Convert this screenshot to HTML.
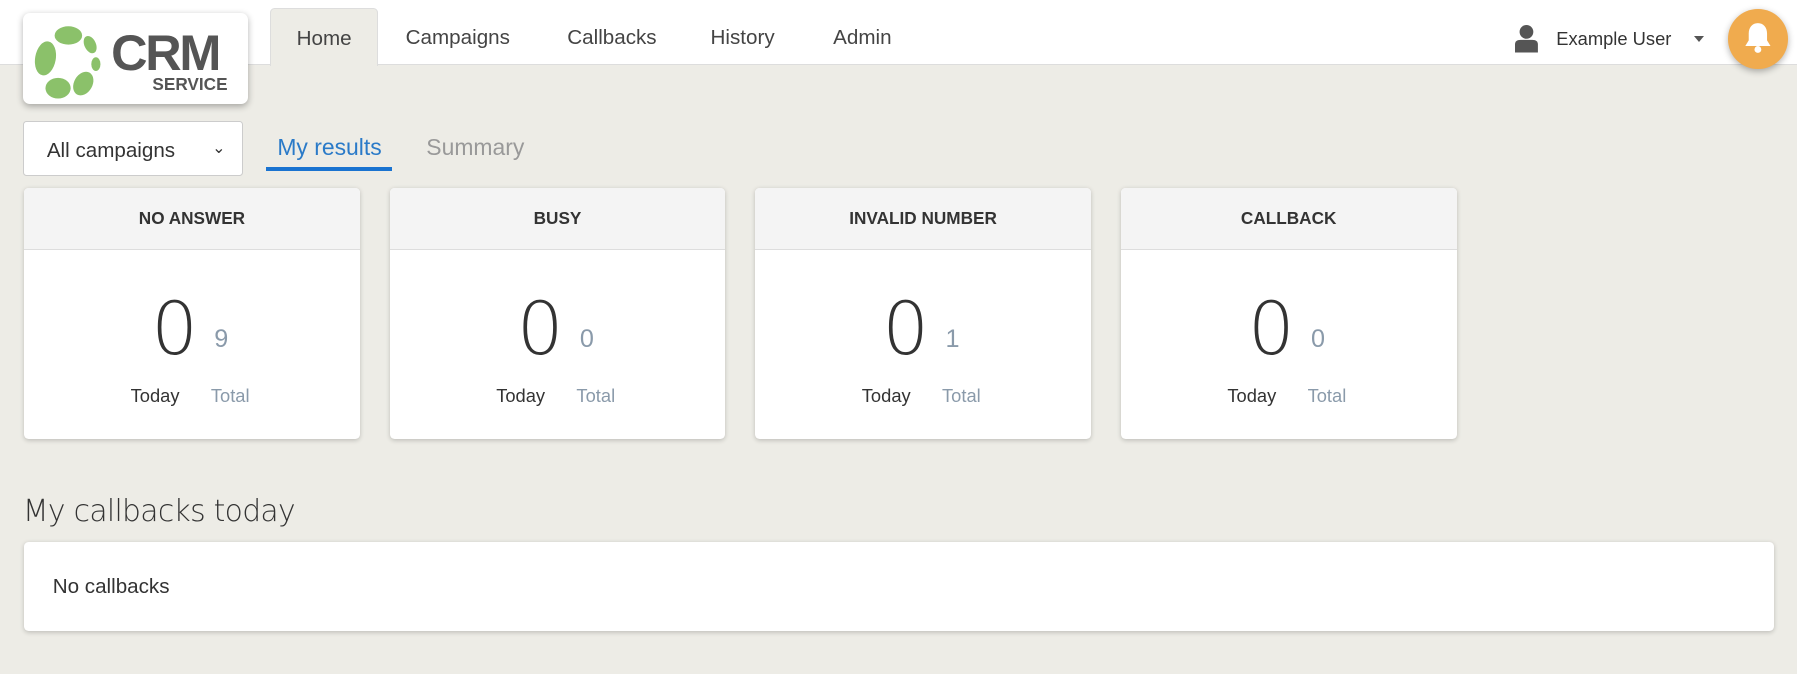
<!DOCTYPE html>
<html><head><style>
html,body{margin:0;padding:0;}
body{width:1797px;height:674px;overflow:hidden;background:#edece6;font-family:"Liberation Sans",sans-serif;color:#333;}
#z{zoom:1.146;width:1568px;height:588px;position:relative;}
.hdr{position:absolute;left:0;top:0;width:1568px;height:56px;background:#fff;border-bottom:1px solid #ddd;}
.logo{position:absolute;left:20px;top:11px;width:196px;height:80px;background:#fff;border-radius:6px;box-shadow:0 2px 6px rgba(0,0,0,.3);}
.tab{position:absolute;top:7px;height:50px;line-height:52px;font-size:18px;color:#444;}
.home{left:236px;width:92px;text-align:center;background:#edece6;border:1px solid #ddd;border-bottom:none;border-radius:4px 4px 0 0;}
.sel{position:absolute;left:20px;top:106px;width:190px;height:46px;background:#fff;border:1px solid #ccc;border-radius:3px;font-size:18px;line-height:50px;text-indent:20px;}
.card{position:absolute;top:164px;width:293px;height:219px;background:#fff;border-radius:4px;box-shadow:0 1px 4px rgba(0,0,0,.2);overflow:hidden;}
.card .t{height:53px;background:#f4f4f4;border-bottom:1px solid #ddd;text-align:center;line-height:53px;font-weight:bold;font-size:15px;}
.big{position:absolute;top:84px;font-family:"DejaVu Sans ExtraLight","DejaVu Sans",sans-serif;font-weight:200;font-size:64px;color:#333;line-height:80px;}
.sm{position:absolute;top:120px;font-size:22px;color:#8a9aaa;}
.l1{position:absolute;top:172px;font-size:16px;color:#333;}
.l2{position:absolute;top:172px;font-size:16px;color:#8a9aaa;}
</style></head><body><div id="z">
<div class="hdr"></div>
<div class="logo">
<svg width="70" height="70" viewBox="0 0 70 70" style="position:absolute;left:10px;top:10px">
<g fill="#8bc16a"><ellipse cx="30" cy="10" rx="12" ry="8"/><ellipse cx="49" cy="18" rx="5" ry="8" transform="rotate(-25 49 18)"/><ellipse cx="54" cy="35" rx="4" ry="6"/><ellipse cx="43" cy="52" rx="8" ry="11" transform="rotate(30 43 52)"/><ellipse cx="21" cy="56" rx="11" ry="9"/><ellipse cx="10" cy="30" rx="9" ry="15" transform="rotate(10 10 30)"/></g></svg>
<div style="position:absolute;left:77px;top:9px;font-size:44px;font-weight:bold;color:#555;letter-spacing:-2px">CRM</div>
<div style="position:absolute;left:113px;top:54px;font-size:15px;font-weight:bold;color:#555">SERVICE</div>
</div>
<div class="tab home">Home</div>
<div class="tab" style="left:354px">Campaigns</div>
<div class="tab" style="left:495px">Callbacks</div>
<div class="tab" style="left:620px">History</div>
<div class="tab" style="left:727px">Admin</div>
<svg width="20" height="24" viewBox="0 0 20 24" style="position:absolute;left:1322px;top:22px"><circle cx="10" cy="6" r="6" fill="#555"/><path d="M0 24V17Q0 13 5 13H15Q20 13 20 17V24Z" fill="#555"/></svg>
<div style="position:absolute;left:1358px;top:24px;font-size:16px;color:#333">Example User</div>
<div style="position:absolute;left:1478px;top:31px;border:5px solid transparent;border-top:6px solid #555"></div>
<div style="position:absolute;left:1508px;top:8px;width:52px;height:52px;border-radius:50%;background:#f0ab4e;box-shadow:0 2px 6px rgba(0,0,0,.3)">
<svg width="26" height="28" viewBox="0 0 26 28" style="position:absolute;left:13px;top:11px"><path d="M13 1C8 1 5 5 5 10V16L2 21H24L21 16V10C21 5 18 1 13 1Z" fill="#fff"/><circle cx="13" cy="24" r="3" fill="#fff"/></svg></div>
<div class="sel">All campaigns<span style="position:absolute;right:14px;top:-2px;font-size:14px;text-indent:0">&#8964;</span></div>
<div style="position:absolute;left:242px;top:117px;font-size:20px;color:#2a7ac8">My results</div>
<div style="position:absolute;left:232px;top:146px;width:110px;height:3px;background:#1a73d0"></div>
<div style="position:absolute;left:372px;top:117px;font-size:20px;color:#999">Summary</div>

<div class="card" style="left:21px"><div class="t">NO ANSWER</div><div class="big" style="left:111px">0</div><div class="sm" style="left:166px">9</div><div class="l1" style="left:93px">Today</div><div class="l2" style="left:163px">Total</div></div>
<div class="card" style="left:340px"><div class="t">BUSY</div><div class="big" style="left:111px">0</div><div class="sm" style="left:166px">0</div><div class="l1" style="left:93px">Today</div><div class="l2" style="left:163px">Total</div></div>
<div class="card" style="left:659px"><div class="t">INVALID NUMBER</div><div class="big" style="left:111px">0</div><div class="sm" style="left:166px">1</div><div class="l1" style="left:93px">Today</div><div class="l2" style="left:163px">Total</div></div>
<div class="card" style="left:978px"><div class="t">CALLBACK</div><div class="big" style="left:111px">0</div><div class="sm" style="left:166px">0</div><div class="l1" style="left:93px">Today</div><div class="l2" style="left:163px">Total</div></div>

<div style="position:absolute;left:20px;top:431px;font-family:'DejaVu Sans ExtraLight','DejaVu Sans',sans-serif;font-weight:200;font-size:26px;letter-spacing:-0.6px;color:#333">My callbacks today</div>
<div style="position:absolute;left:21px;top:473px;width:1527px;height:78px;background:#fff;border-radius:4px;box-shadow:0 1px 4px rgba(0,0,0,.2)"><div style="position:absolute;left:25px;top:29px;font-size:18px">No callbacks</div></div>
</div></body></html>
